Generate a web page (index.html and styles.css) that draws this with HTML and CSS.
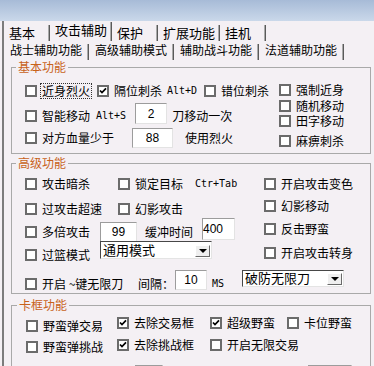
FILE: index.html
```html
<!DOCTYPE html>
<html lang="zh-CN">
<head>
    <meta charset="UTF-8">
    <title>攻击辅助</title>
    <link rel="stylesheet" href="styles.css">
</head>
<body>
    <div class="caption"></div>
    <div class="window">
        <!-- 主标签 -->
        <div class="tabs">
            <span class="tab">基本</span>
            <span class="tab on">攻击辅助</span>
            <span class="tab">保护</span>
            <span class="tab">扩展功能</span>
            <span class="tab">挂机</span>
        </div>
        <div class="tabs sub">
            <span class="tab on">战士辅助功能</span>
            <span class="tab">高级辅助模式</span>
            <span class="tab">辅助战斗功能</span>
            <span class="tab">法道辅助功能</span>
        </div>

        <div class="page">
            <!-- 基本功能 -->
            <fieldset class="group g1">
                <legend>基本功能</legend>
                <div class="cols">
                    <div class="left">
                        <div class="row h24">
                            <label class="chk w72"><span class="box"></span><span class="focus">近身烈火</span></label>
                            <label class="chk w107"><span class="box"><svg viewBox="0 0 8 8"><path d="M1 3.5 L3 5.6 L7 1.4"/></svg></span>隔位刺杀<span class="key ml5">Alt+D</span></label>
                            <label class="chk"><span class="box"></span>错位刺杀</label>
                        </div>
                        <div class="row h26">
                            <label class="chk"><span class="box"></span>智能移动</label>
                            <span class="key ml6">Alt+S</span>
                            <input class="num ml9 w32 h21 up5" type="text" value="2">
                            <span class="ml5">刀移动一次</span>
                        </div>
                        <div class="row h17">
                            <label class="chk"><span class="box"></span>对方血量少于</label>
                            <input class="num ml18 w41 h20" type="text" value="88">
                            <span class="ml12">使用烈火</span>
                        </div>
                    </div>
                    <div class="right">
                        <label class="chk"><span class="box"></span>强制近身</label>
                        <label class="chk"><span class="box"></span>随机移动</label>
                        <label class="chk"><span class="box"></span>田字移动</label>
                        <label class="chk"><span class="box"></span>麻痹刺杀</label>
                    </div>
                </div>
            </fieldset>

            <!-- 高级功能 -->
            <fieldset class="group g2">
                <legend>高级功能</legend>
                <div class="cols">
                    <div class="left">
                        <div class="row h25">
                            <label class="chk w93"><span class="box"></span>攻击暗杀</label>
                            <label class="chk"><span class="box"></span>锁定目标</label>
                            <span class="key ml12">Ctr+Tab</span>
                        </div>
                        <div class="row h26">
                            <label class="chk w93"><span class="box"></span>过攻击超速</label>
                            <label class="chk"><span class="box"></span>幻影攻击</label>
                        </div>
                        <div class="row h20">
                            <label class="chk w75"><span class="box"></span>多倍攻击</label>
                            <input class="num w37 h21" type="text" value="99">
                            <span class="ml8">缓冲时间</span>
                            <input class="num ml9 w33 h22 up6 lft" type="text" value="400">
                        </div>
                        <div class="row h25">
                            <label class="chk w75"><span class="box"></span>过篮模式</label>
                            <div class="combo w112 up9"><span class="val">通用模式</span><span class="btn"></span></div>
                        </div>
                    </div>
                    <div class="right">
                        <label class="chk"><span class="box"></span>开启攻击变色</label>
                        <label class="chk"><span class="box"></span>幻影移动</label>
                        <label class="chk"><span class="box"></span>反击野蛮</label>
                        <label class="chk"><span class="box"></span>开启攻击转身</label>
                    </div>
                </div>
                <div class="row h19 last">
                    <label class="chk w113"><span class="box"></span>开启 ~键无限刀</label>
                    <span>间隔：</span>
                    <input class="num ml1 w32 h20 up7" type="text" value="10">
                    <span class="key ml5">MS</span>
                    <div class="combo ml18 w102 h17 up10"><span class="val">破防无限刀</span><span class="btn"></span></div>
                </div>
            </fieldset>

            <!-- 卡框功能 -->
            <fieldset class="group g3">
                <legend>卡框功能</legend>
                <div class="row h20 first">
                    <label class="chk w91 low"><span class="box"></span>野蛮弹交易</label>
                    <label class="chk w93"><span class="box"><svg viewBox="0 0 8 8"><path d="M1 3.5 L3 5.6 L7 1.4"/></svg></span>去除交易框</label>
                    <label class="chk w77"><span class="box"><svg viewBox="0 0 8 8"><path d="M1 3.5 L3 5.6 L7 1.4"/></svg></span>超级野蛮</label>
                    <label class="chk"><span class="box"></span>卡位野蛮</label>
                </div>
                <div class="row h23">
                    <label class="chk w91 low"><span class="box"></span>野蛮弹挑战</label>
                    <label class="chk w93"><span class="box"><svg viewBox="0 0 8 8"><path d="M1 3.5 L3 5.6 L7 1.4"/></svg></span>去除挑战框</label>
                    <label class="chk"><span class="box"></span>开启无限交易</label>
                </div>
                <div class="row tail">
                    <input class="num w28 h20 ml109" type="text" value="">
                    <label class="chk w71 ml74"><span class="box"></span></label>
                    <input class="num w44 h20" type="text" value="">
                </div>
            </fieldset>
        </div>
    </div>
</body>
</html>
```

FILE: styles.css
```css
body {
    margin: 0;
    height: 366px;
    overflow: hidden;
    background-color: #f4f0f4;
    font-family: "Noto Sans CJK SC", sans-serif;
    font-size: 12px;
    line-height: 14px;
    color: #000;
}
.caption {
    height: 21px;
    background: linear-gradient(#a7bbd7, #cad8ea);
}
.window {
    margin-left: 2px;
    border-left: 2px solid #7c7c7c;
    height: 345px;
}

/* 标签 */
.tabs {
    display: flex;
    align-items: flex-end;
    height: 20px;
    font-size: 13px;
}
.tab {
    box-sizing: border-box;
    height: 16px;
    line-height: 16px;
    min-width: 46px;
    padding: 0 4px 0 5px;
    border-right: 1px solid #5a5a5a;
    box-shadow: inset -1px 0 #a9a9a9;
    white-space: nowrap;
}
.tabs .on {
    height: 19px;
    padding-bottom: 3px;
}
.tabs.sub {
    height: 19px;
    font-size: 12px;
}
.sub .tab,
.sub .on {
    height: 16px;
    line-height: 12px;
    padding: 0 6px 4px 6px;
}

/* 分组 */
.page {
    padding: 1px 3px 0 7px;
}
.group {
    margin: 0;
    min-width: 0;
    padding: 0 0 0 4px;
    border: 1px solid #a9a9a9;
}
.group legend {
    padding: 0 2px;
    line-height: 12px;
    color: #c8621a;
}
.g2 {
    margin-top: 3px;
}
.g3 {
    margin-top: 5px;
    padding-left: 5px;
}
.cols {
    display: flex;
}
.left {
    flex: none;
    padding-left: 9px;
}
.g1 .left {
    width: 254px;
    padding-top: 6px;
}
.g2 .left {
    width: 239px;
    padding-top: 2px;
}
.right {
    display: grid;
    align-items: center;
}
.g1 .right {
    padding-top: 9px;
    grid-template-rows: 16px 15px 15px 25px;
}
.g2 .right {
    padding-top: 3px;
    grid-template-rows: 23px 22px 24px 24px;
}
.g2 .last {
    margin-top: 7px;
    padding-left: 9px;
}
.g3 .row {
    padding-left: 9px;
}
.g3 .first {
    margin-top: 2px;
}
.g3 .tail {
    padding-top: 9px;
}

.row {
    display: flex;
    align-items: center;
    white-space: nowrap;
}
.h17 { height: 17px; }
.h19 { height: 19px; }
.h20 { height: 20px; }
.h23 { height: 23px; }
.h24 { height: 24px; }
.h25 { height: 25px; }
.h26 { height: 26px; }

/* 复选框 */
.chk {
    display: flex;
    align-items: center;
    flex: none;
    line-height: 12px;
}
.box {
    flex: none;
    box-sizing: border-box;
    width: 12px;
    height: 12px;
    margin-right: 5px;
    border: 2px solid #6b6b6b;
    background-color: #fff;
}
.box svg {
    display: block;
    width: 8px;
    height: 8px;
}
.box path {
    fill: none;
    stroke: #000;
    stroke-width: 1.7;
}
.focus {
    line-height: 12px;
    outline: 1px dotted #333;
    outline-offset: 1px;
}
.low {
    margin-top: 5px;
}
.key {
    font-family: "DejaVu Sans Mono", monospace;
    font-size: 10px;
}

/* 输入框 */
.num {
    box-sizing: border-box;
    flex: none;
    margin-top: 0;
    padding: 0;
    border: 1px solid;
    border-color: #9c9c9c #e3e3e3 #e3e3e3 #9c9c9c;
    background-color: #fff;
    font-family: "Liberation Sans", sans-serif;
    font-size: 12px;
    text-align: center;
    outline: none;
}
.lft {
    text-align: left;
}
.combo {
    box-sizing: border-box;
    flex: none;
    display: flex;
    align-items: flex-end;
    height: 18px;
    padding: 0 1px 1px 2px;
    border: 1px solid;
    border-color: #474747 #e4e4e4 #e4e4e4 #474747;
    background-color: #fff;
}
.combo .val {
    flex: 1;
    align-self: center;
    font-size: 13px;
}
.combo .btn {
    box-sizing: border-box;
    display: flex;
    align-items: center;
    justify-content: center;
    width: 15px;
    height: 12px;
    border: 1px solid;
    border-color: #fff #6a6a6a #6a6a6a #fff;
    background-color: #efefef;
}
.combo .btn::after {
    content: "";
    border-left: 4px solid transparent;
    border-right: 4px solid transparent;
    border-top: 4px solid #000;
}

/* 尺寸 */
.w28 { width: 28px; }
.w32 { width: 32px; }
.w33 { width: 33px; }
.w37 { width: 37px; }
.w41 { width: 41px; }
.w44 { width: 44px; }
.w71 { width: 71px; }
.w72 { width: 72px; }
.w75 { width: 75px; }
.w77 { width: 77px; }
.w91 { width: 91px; }
.w93 { width: 93px; }
.w102 { width: 102px; }
.w107 { width: 107px; }
.w112 { width: 112px; }
.w113 { width: 113px; }
.h21 { height: 21px; }
.h22 { height: 22px; }
.combo.h17 { height: 17px; }
.ml1 { margin-left: 1px; }
.ml5 { margin-left: 5px; }
.ml6 { margin-left: 6px; }
.ml8 { margin-left: 8px; }
.ml9 { margin-left: 9px; }
.ml12 { margin-left: 12px; }
.ml18 { margin-left: 18px; }
.ml74 { margin-left: 74px; }
.ml109 { margin-left: 109px; }
.up5 { margin-bottom: 5px; }
.up6 { margin-bottom: 6px; }
.up7 { margin-bottom: 7px; }
.up9 { margin-bottom: 9px; }
.up10 { margin-bottom: 10px; }
```
